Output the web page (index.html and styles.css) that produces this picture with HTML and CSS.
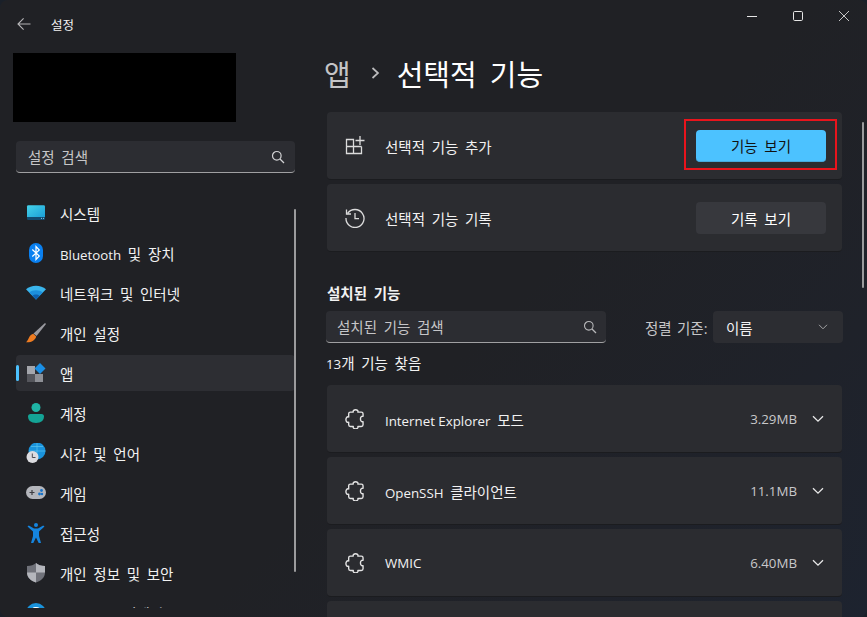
FILE: index.html
```html
<!DOCTYPE html>
<html lang="ko">
<head>
<meta charset="utf-8">
<title>설정</title>
<link rel="stylesheet" href="styles.css">
</head>
<body>
<div class="window">
  <aside class="sidebar">
    <header class="apptitle">
      <svg class="back" width="16" height="16" viewBox="0 0 16 16"><path d="M14.500 8H2.200M7.600 2.400 2 8l5.600 5.600" fill="none" stroke="#b4b4b6" stroke-width="1.100"/></svg>
      <span>설정</span>
    </header>
    <div class="profile"></div>
    <div class="search side-search">
      <span class="placeholder">설정 검색</span>
      <svg width="14" height="14" viewBox="0 0 14 14"><circle cx="5.800" cy="5.800" r="4.300" fill="none" stroke="#d2d2d4" stroke-width="1.200"/><path d="m9 9 4 4" stroke="#d2d2d4" stroke-width="1.300"/></svg>
    </div>
    <nav class="nav">
      <a class="nav-item"><svg class="nav-icon" viewBox="0 0 20 20"><defs><linearGradient id="g1" x1="0" y1="0" x2="1" y2="1"><stop offset="0" stop-color="#45d3ea"/><stop offset="1" stop-color="#1b9fd6"/></linearGradient></defs><path d="M1 3.500Q1 2.200 2.300 2.200H17.700Q19 2.200 19 3.500V14H1Z" fill="url(#g1)"/><path d="M1 14H19V16Q19 17 17.700 17H2.300Q1 17 1 16Z" fill="#124a6e"/><path d="M15 15.400h1M17 15.400h1" stroke="#7cc6e8"/></svg><span>시스템</span></a>
      <a class="nav-item"><svg class="nav-icon" viewBox="0 0 20 20"><rect x="3" y="0" width="14" height="20" rx="7" fill="#0a80f0"/><path d="m6.300 6.500 7 6.500L10 16.500V3.500L13.300 7 6.300 13.500" fill="none" stroke="#fff" stroke-width="1.200"/></svg><span><span class="lat">Bluetooth</span> 및 장치</span></a>
      <a class="nav-item"><svg class="nav-icon" viewBox="0 0 20 20"><path d="M0 6.300C5 1.600 15 1.600 20 6.300L10 16.500Z" fill="#3ab5ec"/><path d="M3.200 9.500C6.500 6.500 13.500 6.500 16.800 9.500L10 16.500Z" fill="#1c8fdc"/><path d="M6.300 12.600C8.200 11 11.800 11 13.700 12.600L10 16.500Z" fill="#0e60ae"/></svg><span>네트워크 및 인터넷</span></a>
      <a class="nav-item"><svg class="nav-icon" viewBox="0 0 20 20"><path d="M19 0 20 1 10.500 13 7.500 10.500Z" fill="#9a9aa0"/><path d="M7.200 10.800 10.200 13.400C9.500 17 5 19.800 0 19.300 2.500 18 2.300 12.500 7.200 10.800Z" fill="#ee7c22"/></svg><span>개인 설정</span></a>
      <a class="nav-item active"><svg class="nav-icon" viewBox="0 0 20 20"><rect x="1" y="3" width="8" height="8" fill="#a4a6ac"/><rect x="1" y="11" width="8" height="8" fill="#55565c"/><rect x="9" y="11" width="8" height="8" fill="#8e9096"/><path d="M14 0 19.500 5.500 14 11 8.500 5.500Z" fill="#1a8fe6"/></svg><span>앱</span></a>
      <a class="nav-item"><svg class="nav-icon" viewBox="0 0 20 20"><circle cx="10" cy="4.500" r="4.500" fill="#1fb5a6"/><path d="M2 13.500Q2 11 4.500 11H15.500Q18 11 18 13.500 18 20 10 20 2 20 2 13.500Z" fill="#14a496"/></svg><span>계정</span></a>
      <a class="nav-item"><svg class="nav-icon" viewBox="0 0 20 20"><circle cx="11" cy="8" r="8.500" fill="#1a93dc"/><path d="M3 8H19.500M11 0V16M5 3.500H17" stroke="#5cc4ee" stroke-width=".7"/><circle cx="6.500" cy="14" r="6" fill="#dcdce0"/><path d="M6.300 10.500V14.500H9.500" fill="none" stroke="#4c4c52" stroke-width="1"/></svg><span>시간 및 언어</span></a>
      <a class="nav-item"><svg class="nav-icon" viewBox="0 0 20 20"><rect x="0" y="3" width="20" height="13" rx="6.500" fill="#b4b6bc"/><path d="M3.500 9.500h5M6 7v5" stroke="#3c3c42" stroke-width="1.200"/><circle cx="15.500" cy="7.500" r="1.400" fill="#1672c8"/><circle cx="13.500" cy="11" r="1.400" fill="#1672c8"/><circle cx="16" cy="11" r="1.200" fill="#1672c8"/></svg><span>게임</span></a>
      <a class="nav-item"><svg class="nav-icon" viewBox="0 0 20 20"><circle cx="10" cy="2" r="2" fill="#1585df"/><path d="M1.500 3.500 2.800 2.400 8 5.500H12L17.200 2.400 18.500 3.500 13 8.500V13L15 20H12.700L10 14.500 7.300 20H5L7 13V8.500Z" fill="#1585df"/></svg><span>접근성</span></a>
      <a class="nav-item"><svg class="nav-icon" viewBox="0 0 20 20"><path d="M10 0C12 2 15 3 19 3V9.500C19 14.500 15 18 10 19.500 5 18 1 14.500 1 9.500V3C5 3 8 2 10 0Z" fill="#70727a"/><path d="M10 0C12 2 15 3 19 3V9.500H10ZM10 9.500V19.500C5 18 1 14.500 1 9.500Z" fill="#b4b6bc"/></svg><span>개인 정보 및 보안</span></a>
      <a class="nav-item"><svg class="nav-icon" viewBox="0 0 20 20"><circle cx="10" cy="10" r="10" fill="#1a93dc"/><path d="M5 9a5.200 5.200 0 0 1 9.500-2M15 11a5.200 5.200 0 0 1-9.500 2" fill="none" stroke="#fff" stroke-width="1.300"/></svg><span><span class="lat">Windows</span> 업데이트</span></a>
    </nav>
    <div class="thumb side-thumb"></div>
  </aside>
  <main class="main">
    <div class="controls">
      <svg width="10" height="10" viewBox="0 0 10 10"><path d="M0 5.500H10" stroke="#e6e6e6"/></svg>
      <svg width="10" height="10" viewBox="0 0 10 10"><rect x=".5" y=".5" width="9" height="9" rx="1.200" fill="none" stroke="#e6e6e6"/></svg>
      <svg width="10" height="10" viewBox="0 0 10 10"><path d="M0 0 10 10M10 0 0 10" stroke="#d8d8d8" stroke-width=".9"/></svg>
    </div>
    <h1 class="crumb"><span class="crumb-parent">앱</span><svg width="9" height="14" viewBox="0 0 9 14"><path d="m1.500 2 5.500 5-5.500 5" fill="none" stroke="#bcbcbe" stroke-width="1.700"/></svg><span>선택적 기능</span></h1>
    <section class="cards top-cards">
      <div class="card">
        <svg class="card-icon" viewBox="0 0 20 20"><path d="M1.500 3.500H8.500V17.500H1.500ZM1.500 10.500H16.500M8.500 17.500H16.500V10.500M15 0V9M10.500 4.500H19.500" fill="none" stroke="#dcdcdc" stroke-width="1.300"/></svg>
        <span class="card-label">선택적 기능 추가</span>
        <button class="btn primary">기능 보기</button>
      </div>
      <div class="card">
        <svg class="card-icon" viewBox="0 0 20 20"><path d="M2.700 5.200A9 9 0 1 1 1 10M1.500 1.500V6H6M10 5V10.700H14" fill="none" stroke="#dcdcdc" stroke-width="1.300"/></svg>
        <span class="card-label">선택적 기능 기록</span>
        <button class="btn">기록 보기</button>
      </div>
    </section>
    <h2 class="section-title">설치된 기능</h2>
    <div class="toolbar">
      <div class="search main-search">
        <span class="placeholder">설치된 기능 검색</span>
        <svg width="14" height="14" viewBox="0 0 14 14"><circle cx="5.800" cy="5.800" r="4.300" fill="none" stroke="#b8b8ba" stroke-width="1.100"/><path d="m9 9 4 4" stroke="#b8b8ba" stroke-width="1.200"/></svg>
      </div>
      <span class="sort-label">정렬 기준:</span>
      <div class="select"><span>이름</span><svg width="10" height="6" viewBox="0 0 10 6"><path d="m1 .8 4 4 4-4" fill="none" stroke="#a4a4a6" stroke-width="1"/></svg></div>
    </div>
    <p class="count"><span class="lat">13</span>개 기능 찾음</p>
    <section class="cards">
      <div class="card">
        <svg class="card-icon" viewBox="1.300 .8 17.400 17.400"><use href="#puzzle"/></svg>
        <span class="card-label"><span class="lat">Internet Explorer</span> 모드</span>
        <span class="size lat">3.29MB</span>
        <svg class="chev" width="12" height="8" viewBox="0 0 12 8"><path d="m1 1.200 5 5 5-5" fill="none" stroke="#e8e8e8" stroke-width="1.300"/></svg>
      </div>
      <div class="card">
        <svg class="card-icon" viewBox="1.300 .8 17.400 17.400"><use href="#puzzle"/></svg>
        <span class="card-label"><span class="lat">OpenSSH</span> 클라이언트</span>
        <span class="size lat">11.1MB</span>
        <svg class="chev" width="12" height="8" viewBox="0 0 12 8"><path d="m1 1.200 5 5 5-5" fill="none" stroke="#e8e8e8" stroke-width="1.300"/></svg>
      </div>
      <div class="card">
        <svg class="card-icon" viewBox="1.300 .8 17.400 17.400"><use href="#puzzle"/></svg>
        <span class="card-label lat">WMIC</span>
        <span class="size lat">6.40MB</span>
        <svg class="chev" width="12" height="8" viewBox="0 0 12 8"><path d="m1 1.200 5 5 5-5" fill="none" stroke="#e8e8e8" stroke-width="1.300"/></svg>
      </div>
      <div class="card"></div>
    </section>
    <div class="thumb main-thumb"></div>
  </main>
</div>
<svg class="defs" width="0" height="0"><defs><path id="puzzle" d="M8.500 3.500C7.500 .8 13.500 .8 12.500 3.500H15.500Q17 3.500 17 5V7.200C14 6.400 14 12.600 17 11.800V14.500Q17 16 15.500 16H12.500C13.500 18.800 7.500 18.800 8.500 16H6Q4.500 16 4.500 14.500V12.300C1.300 13.300 1.300 6.700 4.500 7.700V5Q4.500 3.500 6 3.500Z" fill="none" stroke="#e4e4e4" stroke-width="1.200" stroke-linejoin="round"/></defs></svg>
</body>
</html>
```

FILE: styles.css
```css
* { box-sizing: border-box; }
html, body { margin: 0; height: 100%; background: #1a2029; }
body { width: 867px; height: 617px; overflow: hidden; font-family: "Open Sans", "Noto Sans CJK KR", sans-serif; font-size: 14.5px; word-spacing: 2.9px; color: #f2f2f2; }
.lat { font-size: 13.3px; word-spacing: 0; }
.defs { position: absolute; }
.window { display: flex; width: 867px; height: 617px; border-radius: 8px; overflow: hidden; background: linear-gradient(135deg, #202125 0%, #202125 55%, #1f222a 80%, #1d232f 100%); }

.sidebar { position: relative; flex: 0 0 310px; display: flex; flex-direction: column; padding: 0 0 9px 16px; }
.apptitle { display: flex; align-items: center; height: 48px; font-size: 12.500px; }
.back { margin-right: 19px; }
.profile { flex: none; width: 223px; height: 69px; margin: 5px 0 19px -3px; background: #000; }
.search { display: flex; align-items: center; justify-content: space-between; height: 32px; background: #2c2d32; border-radius: 4px; border-bottom: 1px solid #a0a0a2; }
.side-search { flex: none; width: 279px; padding: 0 10px 0 12px; }
.placeholder { color: #c6c6c8; }
.nav { flex: 1; min-height: 0; overflow: hidden; margin-top: 22px; display: flex; flex-direction: column; gap: 4px; width: 279px; }
.nav-item { position: relative; flex: none; display: flex; align-items: center; height: 36px; padding-left: 10px; border-radius: 4px; }
.nav-item.active { background: #2d2e33; }
.nav-item.active::before { content: ""; position: absolute; left: 0; top: 10px; width: 3px; height: 16px; border-radius: 2px; background: #4cc2ff; }
.nav-icon { width: 20px; height: 20px; margin-right: 14px; flex: none; }
.thumb { position: absolute; width: 2px; border-radius: 1px; background: #9b9b9d; }
.side-thumb { left: 294px; top: 209px; height: 363px; }

.main { position: relative; flex: 1; min-width: 0; padding: 0 24px 0 16px; }
.controls { display: flex; justify-content: flex-end; align-items: center; gap: 36px; height: 32px; margin-right: -6px; }
.crumb { display: flex; align-items: center; height: 80px; margin: 0 0 0 -2px; padding-top: 2px; font-size: 29px; font-weight: 400; word-spacing: 5.500px; color: #fff; }
.crumb-parent { color: #c4c4c6; margin-right: 20px; }
.crumb svg { margin-right: 17px; }
.cards { display: flex; flex-direction: column; gap: 4px; }
.card { display: flex; align-items: center; flex: none; height: 68px; padding: 1px 16px 0 18px; margin: 0 1px; background: #2b2c30; border-radius: 4px; border-bottom: 1px solid #1b1c1f; }
.card-icon { width: 20px; height: 20px; margin-right: 20px; flex: none; }
.card-label { flex: 1; }
.btn { position: relative; width: 130px; height: 32px; border: 0; border-radius: 4px; font: inherit; word-spacing: inherit; color: #fff; background: #37383d; }
.btn.primary { background: #4cc2ff; color: #111; border-bottom: 1px solid #45a9dd; }
.btn.primary::after { content: ""; position: absolute; left: -12px; right: -11px; top: -11px; bottom: -9px; border: 2px solid #e9141c; }
.section-title { margin: 32px 0 0 1px; height: 20px; line-height: 20px; font-size: 14.500px; font-weight: 700; }
.toolbar { display: flex; align-items: center; margin-top: 7px; height: 32px; }
.main-search { width: 280px; padding: 0 9px 0 11px; margin-right: 39px; }
.sort-label { width: 68px; color: #c6c6c8; white-space: nowrap; word-spacing: 1.500px; }
.select { display: flex; align-items: center; justify-content: space-between; width: 130px; height: 32px; padding: 0 15px 0 13px; border-radius: 4px; background: #2c2d32; }
.count { margin: 11px 0 11px; height: 20px; line-height: 20px; }
.size { color: #c8c8ca; margin-right: 15px; }
.chev { margin-right: 2px; }
.main-thumb { left: 552px; top: 122px; height: 166px; }
```
